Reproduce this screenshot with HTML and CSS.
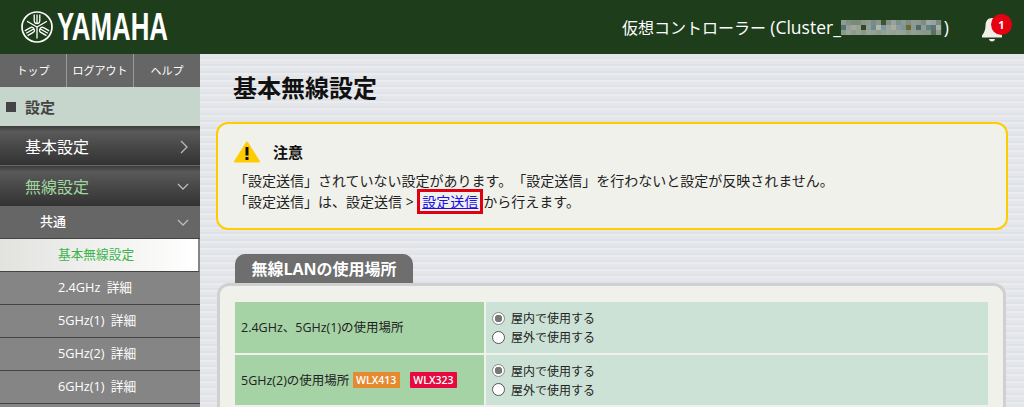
FILE: index.html
```html
<!DOCTYPE html>
<html lang="ja">
<head>
  <meta charset="UTF-8" />
  <title>基本無線設定</title>
  <link rel="stylesheet" href="styles.css">
</head>
<body>
  <header>
    <div class="logo">
      <svg width="32" height="32" viewBox="-16 -16 32 32" fill="none" stroke="#fff">
        <circle r="15" stroke-width="1.700"/>
        <g stroke-width="1.300">
          <g>
            <path d="M-2.800 -12.500V-6.500Q-2.800 -3.500 0 -3.500Q2.800 -3.500 2.800 -6.500V-12.500M0 -12.500V-3.500M0 0V11.500"/>
          </g>
          <g transform="rotate(120)">
            <path d="M-2.800 -12.500V-6.500Q-2.800 -3.500 0 -3.500Q2.800 -3.500 2.800 -6.500V-12.500M0 -12.500V-3.500M0 0V11.500"/>
          </g>
          <g transform="rotate(240)">
            <path d="M-2.800 -12.500V-6.500Q-2.800 -3.500 0 -3.500Q2.800 -3.500 2.800 -6.500V-12.500M0 -12.500V-3.500M0 0V11.500"/>
          </g>
        </g>
      </svg>
      <span class="logo-text">YAMAHA</span>
    </div>
    <div class="header-right">
      <div class="controller">仮想コントローラー&nbsp;<span class="cluster">(Cluster_</span><svg class="mosaic" id="mosaic" width="103" height="15"></svg><span class="cluster">)</span></div>
      <div class="bell">
        <svg width="20" height="24" viewBox="0 0 20 24" fill="#f0f0e8">
          <path d="M10 0c-4.500 0-6.500 3.500-6.500 8 0 4-1.500 7-3.500 9.500v2h20v-2c-2-2.500-3.500-5.500-3.500-9.500 0-4.500-2-8-6.500-8z"/>
          <path d="M7 21h6c-.5 1.800-1.500 2.500-3 2.500s-2.500-.7-3-2.500z"/>
        </svg>
        <span class="badge">1</span>
      </div>
    </div>
  </header>

  <div class="layout">
    <nav class="sidebar">
      <div class="tabs">
        <a>トップ</a>
        <a>ログアウト</a>
        <a>ヘルプ</a>
      </div>
      <div class="nav-title"><span class="square"></span>設定</div>
      <div class="nav-main">基本設定
        <svg class="chev" width="12" height="14" viewBox="0 0 12 14"><path d="M3 1l6 6-6 6"/></svg>
      </div>
      <div class="nav-main open">無線設定
        <svg class="chev" width="14" height="12" viewBox="0 0 14 12"><path d="M2 4l5 5 5-5"/></svg>
      </div>
      <div class="nav-group">共通
        <svg class="chev" width="14" height="12" viewBox="0 0 14 12"><path d="M2 4l5 5 5-5"/></svg>
      </div>
      <div class="nav-item active">基本無線設定</div>
      <div class="nav-item">2.4GHz 詳細</div>
      <div class="nav-item">5GHz(1) 詳細</div>
      <div class="nav-item">5GHz(2) 詳細</div>
      <div class="nav-item">6GHz(1) 詳細</div>
    </nav>

    <main class="content">
      <h1>基本無線設定</h1>

      <div class="notice">
        <div class="notice-head">
          <svg width="26" height="22" viewBox="0 0 26 22">
            <path d="M13 1.500L25 20.500H1z" fill="#fc0" stroke="#fc0" stroke-width="2" stroke-linejoin="round"/>
            <rect x="11.500" y="6" width="3" height="8.500" fill="#111"/>
            <rect x="11.500" y="16" width="3" height="3" fill="#111"/>
          </svg>
          <strong>注意</strong>
        </div>
        <p>「設定送信」されていない設定があります。「設定送信」を行わないと設定が反映されません。</p>
        <p>「設定送信」は、設定送信 &gt; <a class="send-link" href="#">設定送信</a>から行えます。</p>
      </div>

      <div class="section-tab">無線LANの使用場所</div>
      <div class="panel">
        <table>
          <tr>
            <th>2.4GHz、5GHz(1)の使用場所</th>
            <td>
              <label><span class="radio checked"></span>屋内で使用する</label>
              <label><span class="radio"></span>屋外で使用する</label>
            </td>
          </tr>
          <tr>
            <th>5GHz(2)の使用場所 <span class="tag orange">WLX413</span><span class="tag red">WLX323</span></th>
            <td>
              <label><span class="radio checked"></span>屋内で使用する</label>
              <label><span class="radio"></span>屋外で使用する</label>
            </td>
          </tr>
        </table>
      </div>
    </main>
  </div>

  <script>
    // blurred-out cluster name, drawn as a mosaic
    const rows = [
      '8e9a92 7f8f86 7c8a78 7d8a7a 8a9488 8f9a8e 7a8c86 8a968c 3f5232 7f9288 98a29a 7f9088 8c9a92 7d8e88 8f9a94 8a9890 7e8c84 a0a89e 98a29c 7c8a84',
      '56736e 93a098 a0a89c 96a298 2e4a22 8fa09a 6c8a94 b2b8a4 7a98a0 9da598 a8ae9e 8a9c98 7d94a0 6f6c2a 8a9a90 4f6a5e 8d9c94 66808a 5c7478 a8b0a8',
      '8a9a92 9aa498 8e9a8c 96a096 8a988e 9aa29a 94a098 8e9a90 96a098 9aa498 94a098 9aa29a 94a098 8a968c 90a096 8e9a92 8a968e 8a9688 5f6f58 8e9a94'
    ];
    let html = '';
    rows.forEach((row, y) => {
      row.split(' ').forEach((c, x) => {
        html += `<rect x="${x * 5}" y="${y * 5}" width="5.200" height="5" fill="#${c}"/>`;
      });
    });
    document.getElementById('mosaic').innerHTML = html;
  </script>
</body>
</html>
```

FILE: styles.css
```css
* {
  margin: 0;
  padding: 0;
  box-sizing: border-box;
}

html, body {
  height: 100%;
  overflow: hidden;
}

body {
  font-family: "Open Sans", "Noto Sans CJK JP", sans-serif;
  font-size: 13px;
  color: #222;
  text-spacing-trim: space-all;
}

header {
  height: 54px;
  background: #1e3d1b;
  color: #fff;
  display: flex;
  justify-content: space-between;
  align-items: center;
  padding: 0 22px 0 21px;
}

.logo {
  display: flex;
  align-items: center;
  gap: 4px;
}

.logo-text {
  font-family: "Liberation Sans", sans-serif;
  font-weight: bold;
  font-size: 38px;
  line-height: 1;
  width: 110px;
  display: inline-block;
  transform: scaleX(0.68);
  transform-origin: left center;
}

.header-right {
  display: flex;
  align-items: center;
  gap: 33px;
}

.controller {
  display: flex;
  align-items: center;
  font-size: 16px;
}

.cluster {
  font-size: 17.500px;
}

.bell {
  position: relative;
  width: 20px;
  height: 24px;
  margin-top: 6px;
}

.badge {
  position: absolute;
  top: -4px;
  left: 9px;
  width: 21px;
  height: 21px;
  border-radius: 50%;
  background: #e60012;
  color: #fff;
  font-size: 11px;
  font-weight: bold;
  line-height: 21px;
  text-align: center;
}

.layout {
  display: flex;
  height: 353px;
}

.sidebar {
  width: 200px;
  flex-shrink: 0;
  background: #858585;
  color: #fff;
}

.tabs {
  display: flex;
  height: 33px;
  background: #666;
}

.tabs a {
  flex: 1;
  font-size: 11px;
  line-height: 33px;
  text-align: center;
  white-space: nowrap;
  border-left: 1px solid #999;
}

.tabs a:first-child {
  border-left: none;
}

.nav-title {
  display: flex;
  align-items: center;
  height: 39px;
  padding-left: 6px;
  background: #c6d6cc;
  color: #444;
  font-size: 15px;
  font-weight: bold;
}

.square {
  width: 10px;
  height: 10px;
  margin-right: 9px;
  background: #444;
}

.nav-main {
  position: relative;
  height: 40px;
  padding-left: 25px;
  background: linear-gradient(#3c3c3c, #5a5a5a 15%, #464646 55%, #333);
  border-bottom: 1px solid #666;
  font-size: 16px;
  line-height: 42px;
}

.nav-main.open {
  color: #9fd79f;
  border-bottom: none;
}

.chev {
  position: absolute;
  right: 10px;
  top: 14px;
  fill: none;
  stroke: #bbb;
  stroke-width: 1.300;
}

.nav-group {
  position: relative;
  height: 33px;
  padding-left: 40px;
  background: #666;
  border-bottom: 1px solid #444;
  font-size: 13px;
  font-weight: 500;
  line-height: 31px;
}

.nav-group .chev {
  top: 10px;
}

.nav-item {
  height: 33px;
  padding-left: 58px;
  border-bottom: 1px solid #444;
  font-size: 12.700px;
  word-spacing: 3px;
  line-height: 31px;
}

.nav-item.active {
  background: linear-gradient(to right, #e2e2df, #fff);
  border-right: 2px solid #858585;
  color: #3cb44b;
}

.content {
  flex: 1;
  padding: 16px 16px 0;
  background: repeating-linear-gradient(#e4e6ea 0, #e4e6ea 3px, #dfe2e6 3px, #dfe2e6 5px, #eaebee 5px, #eaebee 7px);
}

h1 {
  margin-left: 17px;
  font-size: 24px;
  line-height: 36px;
  color: #111;
}

.notice {
  height: 108px;
  margin-top: 16px;
  padding: 16px 0 0 16px;
  background: #f1f1eb;
  border: 2px solid #fc0;
  border-radius: 12px;
  font-size: 14px;
  line-height: 21px;
}

.notice-head {
  display: flex;
  align-items: center;
  gap: 13px;
  height: 24px;
  margin-bottom: 6px;
  font-size: 15px;
}

.notice-head strong {
  color: #111;
}

.send-link {
  color: #1a0dee;
  margin: 0 3px;
  padding: 0 2px;
  outline: 3px solid #e00012;
}

.section-tab {
  width: 178px;
  height: 29px;
  margin: 24px 0 0 19px;
  background: #6e6e6e;
  border-radius: 10px 10px 0 0;
  color: #fff;
  font-size: 16px;
  font-weight: bold;
  line-height: 30px;
  text-align: center;
}

.panel {
  padding: 16px 15px;
  margin-left: 1px;
  margin-right: 2px;
  background: #f1f1eb;
  border: 3px solid #cfd0d2;
  border-width: 3px 3px 0 3px;
  border-radius: 12px 12px 0 0;
}

table {
  width: 100%;
  border-collapse: collapse;
  table-layout: fixed;
}

th, td {
  height: 52px;
  border-bottom: 2px solid #f1f1eb;
  font-size: 12px;
  font-weight: normal;
  text-align: left;
  color: #222;
}

th {
  width: 250px;
  padding: 0 0 2px 6px;
  background: #a5d3a5;
  border-right: 2px solid #f1f1eb;
  font-size: 12.500px;
}

td {
  padding-left: 6px;
  background: #cde2d6;
}

label {
  display: flex;
  align-items: center;
  gap: 6px;
  height: 19px;
}

.radio {
  width: 13px;
  height: 13px;
  border-radius: 50%;
  border: 1px solid #555;
  background: #fff;
}

.radio.checked {
  background: radial-gradient(circle, #777 0, #777 3.500px, #fff 4px);
  border-color: #888;
}

.tag {
  display: inline-block;
  height: 16px;
  padding: 0 3.500px;
  margin-right: 10px;
  border-radius: 1px;
  color: #fff;
  font-size: 10.500px;
  font-weight: 600;
  line-height: 16px;
  vertical-align: 1px;
}

.tag.orange {
  background: #e58a2e;
}

.tag.red {
  background: #e5093f;
}
```
